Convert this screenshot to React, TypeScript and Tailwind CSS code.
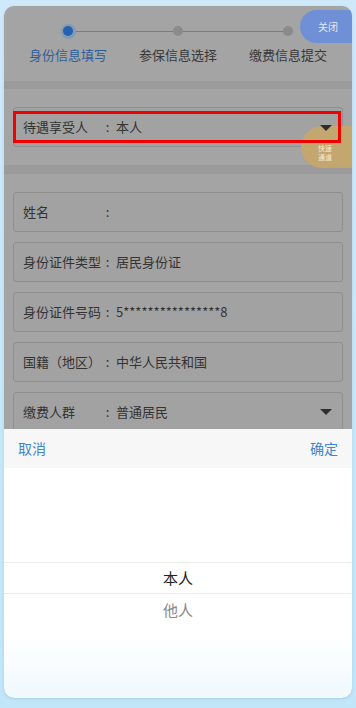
import React from 'react';

const font = { fontFamily: '"Noto Sans CJK SC", "Noto Sans", sans-serif' };

const steps = [
  { label: '身份信息填写', active: true },
  { label: '参保信息选择', active: false },
  { label: '缴费信息提交', active: false },
];

const fields = [
  { label: '姓名', value: '' },
  { label: '身份证件类型', value: '居民身份证' },
  { label: '身份证件号码', value: '5****************8' },
  { label: '国籍（地区）', value: '中华人民共和国' },
  { label: '缴费人群', value: '普通居民', select: true },
];

const Caret = () => (
  <span className="ml-auto mr-[10px] w-0 h-0 border-l-[6px] border-r-[6px] border-t-[6px] border-l-transparent border-r-transparent border-t-[#2e2e2e]" />
);

const Field: React.FC<{ label: string; value: string; select?: boolean }> = ({ label, value, select }) => (
  <div className="h-[40px] flex items-center rounded-[3px] border border-[#8f8f8f] bg-[#a2a2a2] pl-[9px] text-[13px] text-[#333]">
    <span className="w-[80px] shrink-0">{label}</span>
    <span className="w-[9px] text-center">:</span>
    <span className="ml-[4px]">{value}</span>
    {select && <Caret />}
  </div>
);

export default function App() {
  return (
    <div className="w-[356px] h-[708px] bg-gradient-to-b from-[#cfe9fa] to-[#c2e6f9] pt-[6px] px-[4px]" style={font}>
      <div className="relative w-[348px] h-[692px] rounded-[10px] overflow-hidden bg-[#a4a4a4] flex flex-col shadow-[0_1px_3px_rgba(120,170,210,0.35)]">
        {/* steps */}
        <div className="h-[75px] grid grid-cols-3 px-[9px] pt-[18px]">
          {steps.map((s, i) => (
            <div key={s.label} className="flex flex-col items-center">
              <div className="w-full h-[14px] flex items-center">
                <div className={`flex-1 h-px ${i === 0 ? 'bg-transparent' : 'bg-[#7c7c7c]'}`} />
                {s.active ? (
                  <div className="w-[15px] h-[15px] rounded-full bg-[#8399b8] flex items-center justify-center">
                    <div className="w-[10px] h-[10px] rounded-full bg-[#2461ae]" />
                  </div>
                ) : (
                  <div className="w-[10px] h-[10px] rounded-full bg-[#8b8b8b]" />
                )}
                <div className={`flex-1 h-px ${i === 2 ? 'bg-transparent' : 'bg-[#7c7c7c]'}`} />
              </div>
              <span className={`mt-[8px] text-[13px] leading-[18px] ${s.active ? 'text-[#2f5e9d]' : 'text-[#383838]'}`}>{s.label}</span>
            </div>
          ))}
        </div>

        <div className="h-[8px] bg-[#9b9b9b]" />

        {/* beneficiary */}
        <div className="h-[76px] px-[9px] pt-[18px]">
          <Field label="待遇享受人" value="本人" />
        </div>

        <div className="h-[9px] bg-[#9b9b9b]" />

        <div className="px-[9px] pt-[18px] flex flex-col gap-[10px]">
          {fields.map(f => (
            <Field key={f.label} label={f.label} value={f.value} select={f.select} />
          ))}
        </div>

        {/* close button */}
        <div className="absolute left-[296px] top-[4px] w-[60px] h-[33px] rounded-l-full bg-[#6f8fd6] flex items-center pl-[18px] text-[10px] text-[#e3e9f7]">
          关闭
        </div>

        {/* floating bubble */}
        <div className="absolute left-[297px] top-[120px] w-[60px] h-[42px] rounded-l-full bg-[#c8a669]/90 flex flex-col items-start justify-end pb-[6px] pl-[17px] text-[7px] leading-[9px] text-[#f4ead8] whitespace-nowrap">
          <span className="block">快速</span>
          <span className="block">通道</span>
        </div>
        {/* highlight annotation */}
        <div className="absolute left-[9px] top-[105px] w-[328px] h-[32px] border-[3px] border-[#f00000] pointer-events-none" />
        <div className="absolute left-[316px] top-[119px] w-0 h-0 border-l-[6px] border-r-[6px] border-t-[6px] border-l-transparent border-r-transparent border-t-[#2e2e2e]" />

        {/* bottom sheet */}
        <div className="absolute left-0 right-0 bottom-0 h-[269px] flex flex-col bg-gradient-to-b from-white from-75% to-[#f0f9fe]">
          <div className="h-[39px] bg-[#f7f7f7] flex items-center justify-between px-[14px] text-[14px] text-[#3f86cf]">
            <span>取消</span>
            <span>确定</span>
          </div>
          <div className="pt-[94px] flex flex-col">
            <div className="h-[32px] border-y border-[#ebebeb] flex items-center justify-center text-[15px] text-[#222]">本人</div>
            <div className="h-[32px] flex items-center justify-center text-[15px] text-[#8a8a8a]">他人</div>
          </div>
        </div>
      </div>
    </div>
  );
}
